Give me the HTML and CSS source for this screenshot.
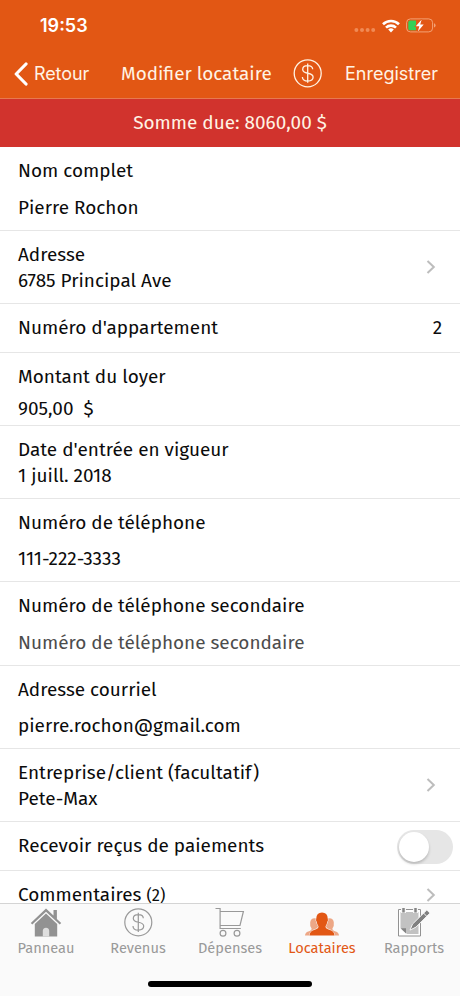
FILE: index.html
```html
<!DOCTYPE html>
<html lang="fr">
<head>
    <meta charset="UTF-8">
    <meta name="viewport" content="width=device-width, initial-scale=1.0">
    <title>Modifier locataire</title>
    <link rel="stylesheet" href="styles.css">
</head>
<body>
    <div class="screen">
        <header class="header">
            <div class="status-bar">
                <span class="time">19:53</span>
                <div class="status-icons">
                    <svg width="22" height="6" viewBox="0 0 22 6" fill="#f08a55">
                        <circle cx="2.4" cy="3" r="2"/><circle cx="8" cy="3" r="2"/><circle cx="13.6" cy="3" r="2"/><circle cx="19.2" cy="3" r="2"/>
                    </svg>
                    <svg class="wifi" width="18" height="14" viewBox="0 0 18 14" fill="none" stroke="#fff" stroke-width="2.6">
                        <path d="M1 5.3a11.4 11.4 0 0 1 16 0"/>
                        <path d="M4 8.6a7.2 7.2 0 0 1 10 0"/>
                        <path d="M6.2 10.6a4 4 0 0 1 5.6 0L9 13.6z" fill="#fff" stroke="none"/>
                    </svg>
                    <svg width="30" height="15" viewBox="0 0 30 15">
                        <rect x=".6" y=".9" width="26" height="13" rx="3.8" fill="none" stroke="#f3a276"/>
                        <path d="M28 5.2q1.6.6 1.6 2.2T28 9.6z" fill="#f3a276"/>
                        <path d="M4.2 2.5H10v9.8H4.2q-1.9 0-1.9-1.9V4.4q0-1.9 1.9-1.9z" fill="#33d057"/>
                        <path d="M15.7 1.4 9.8 8.2h3.5l-1.4 5.2 5.8-6.9h-3.5z" fill="#fff" stroke="#e25714" stroke-width="1.4" paint-order="stroke"/>
                    </svg>
                </div>
            </div>
            <nav class="nav-bar">
                <a class="back">
                    <svg width="14" height="24" viewBox="0 0 14 24" fill="none" stroke="#fff" stroke-width="3.2" stroke-linecap="round" stroke-linejoin="round">
                        <path d="M12 2 2.2 12 12 22"/>
                    </svg>
                    <span>Retour</span>
                </a>
                <h1 class="title">Modifier locataire</h1>
                <svg width="30" height="30" viewBox="0 0 30 30" fill="none" stroke="#fff3e4" stroke-width="1.3">
                    <circle cx="14.7" cy="14.3" r="13.5"/>
                    <path d="M14.7 4.6v19.2M19.7 10.3c0-2.4-2-3.7-5-3.7s-5 1.4-5 3.8c0 5.4 10.4 2.3 10.4 7.7 0 2.5-2.2 4-5.4 4s-5.3-1.5-5.3-4.2"/>
                </svg>
                <a class="save">Enregistrer</a>
            </nav>
        </header>

        <div class="amount-due"><span>Somme due: 8060,00 $</span></div>

        <main class="form">
            <div class="row row-tall">
                <div class="label">Nom complet</div>
                <div class="value">Pierre Rochon</div>
            </div>
            <div class="row row-link">
                <div>
                    <div class="label">Adresse</div>
                    <div class="value">6785 Principal Ave</div>
                </div>
                <svg class="chevron" width="10" height="16" viewBox="0 0 10 16"><path d="M1.5 2 7.8 8l-6.3 6"/></svg>
            </div>
            <div class="row row-single">
                <div class="label">Numéro d'appartement</div>
                <div class="value">2</div>
            </div>
            <div class="row row-amount">
                <div class="label">Montant du loyer</div>
                <div class="value">905,00&nbsp; $</div>
            </div>
            <div class="row row-medium">
                <div class="label">Date d'entrée en vigueur</div>
                <div class="value">1 juill. 2018</div>
            </div>
            <div class="row row-tall">
                <div class="label">Numéro de téléphone</div>
                <div class="value">111-222-3333</div>
            </div>
            <div class="row row-tall">
                <div class="label">Numéro de téléphone secondaire</div>
                <div class="value placeholder">Numéro de téléphone secondaire</div>
            </div>
            <div class="row row-tall">
                <div class="label">Adresse courriel</div>
                <div class="value">pierre.rochon@gmail.com</div>
            </div>
            <div class="row row-link">
                <div>
                    <div class="label">Entreprise/client (facultatif)</div>
                    <div class="value">Pete-Max</div>
                </div>
                <svg class="chevron" width="10" height="16" viewBox="0 0 10 16"><path d="M1.5 2 7.8 8l-6.3 6"/></svg>
            </div>
            <div class="row row-single row-switch">
                <div class="label">Recevoir reçus de paiements</div>
                <div class="switch"><div class="knob"></div></div>
            </div>
            <div class="row row-single row-last">
                <div class="label">Commentaires <span class="count">(2)</span></div>
                <svg class="chevron" width="10" height="16" viewBox="0 0 10 16"><path d="M1.5 2 7.8 8l-6.3 6"/></svg>
            </div>
        </main>

        <footer class="tab-bar">
            <div class="tabs">
                <a class="tab">
                    <svg width="32" height="32" viewBox="0 0 32 32" fill="#929292">
                        <path d="M16 1.5.8 16l1.5 1.5L16 4.8l13.7 12.7 1.5-1.5-4.3-4.1V3h-3.4v5.6z"/>
                        <path d="M16 6.5 4.8 17v12.5h22.400V17z"/>
                        <path d="M12.800 29.500v-5.700c0-4 6.400-4 6.400 0v5.700z" fill="#dedede"/>
                    </svg>
                    <span>Panneau</span>
                </a>
                <a class="tab">
                    <svg width="32" height="32" viewBox="0 0 32 32" fill="none" stroke="#999" stroke-width="1.2">
                        <circle cx="16.300" cy="15.300" r="13.5"/>
                        <path d="M16.300 5.700v19.200M21.300 11.300c0-2.400-2-3.700-5-3.700s-5 1.400-5 3.800c0 5.400 10.400 2.300 10.400 7.700 0 2.500-2.200 4-5.400 4s-5.300-1.500-5.300-4.200"/>
                    </svg>
                    <span>Revenus</span>
                </a>
                <a class="tab">
                    <svg width="32" height="32" viewBox="0 0 32 32" fill="none" stroke="#999" stroke-width="1.2">
                        <path d="M1.500 1.500h4.600v20h20.700M6.100 4.500h23.300L26 18.500H6.100"/>
                        <circle cx="9" cy="26.300" r="2.900"/><circle cx="23" cy="26.300" r="2.900"/>
                    </svg>
                    <span>Dépenses</span>
                </a>
                <a class="tab active">
                    <svg width="34" height="32" viewBox="0 0 34 32" fill="#e25714">
                        <g opacity=".5">
                            <path d="M0 28.500q.3-3.400 3.300-4.100 3.400-.8 3.300-3-2-2.600-1.400-6.100.6-4.100 4.300-4.100t4.400 4.100q.5 3.500-1.500 6.100v7.100z"/>
                            <path d="M34 28.500q-.3-3.400-3.300-4.100-3.400-.8-3.300-3 2-2.600 1.400-6.100-.6-4.100-4.300-4.100t-4.400 4.100q-.5 3.500 1.500 6.100v7.100z"/>
                        </g>
                        <path d="M4.500 28.500q.2-4.400 4.700-5.600 4.500-1 4.300-3.700-1.500-1.800-1.800-4.700-1-.9-.5-2.600Q11.500 5.500 17 5.500t5.800 6.400q.5 1.700-.5 2.600-.3 2.900-1.800 4.700-.2 2.700 4.300 3.700 4.500 1.200 4.700 5.600z" stroke="#fafafa" paint-order="stroke"/>
                    </svg>
                    <span>Locataires</span>
                </a>
                <a class="tab">
                    <svg width="34" height="32" viewBox="0 0 34 32">
                        <path d="M1.500 2.500h22V29h-22z" fill="#fff" stroke="#929292"/>
                        <path d="M3.500 5h18v22H10l-6.500-6.500z" fill="#c2c2c2"/>
                        <path d="M3.500 21.300 9 26.500v-5.200z" fill="#858585"/>
                        <path d="M6.500 1v5M18.500 1v5" stroke="#f7f7f7" stroke-width="5"/>
                        <path d="M6.500 1v4.500M18.500 1v4.500" stroke="#858585" stroke-width="2.500"/>
                        <path d="M29.800 3 33 6.100 19 20.100l-6 3 2.500-6z" fill="#808080" stroke="#f4f4f4"/>
                        <path d="m26.500 6 3.400 3.500" stroke="#f4f4f4"/>
                    </svg>
                    <span>Rapports</span>
                </a>
            </div>
            <div class="home-indicator"></div>
        </footer>
    </div>
</body>
</html>
```
FILE: styles.css
```css
* {
    margin: 0;
    padding: 0;
    box-sizing: border-box;
}

body {
    font-family: 'Fira Sans', 'Noto Sans', sans-serif;
    background: #fff;
    color: #0b0b0b;
}

.screen {
    width: 460px;
    height: 996px;
    display: flex;
    flex-direction: column;
    overflow: hidden;
}

.header {
    height: 99px;
    flex-shrink: 0;
    background: #e25714;
    border-bottom: 1px solid #e77950;
    color: #fff3e4;
}

.status-bar {
    display: flex;
    justify-content: space-between;
    height: 49px;
    padding: 14px 24px 0 40px;
}

.time {
    font-family: Inter, sans-serif;
    font-size: 18px;
    font-weight: 600;
    line-height: 24px;
    color: #fff;
}

.status-icons {
    display: flex;
    align-items: center;
    height: 23px;
}

.status-icons svg:first-child {
    margin-top: 9px;
}

.wifi {
    margin: 0 6px;
}

.nav-bar {
    display: flex;
    align-items: center;
    height: 49px;
    padding: 0 22px 0 14px;
    white-space: nowrap;
}

.back {
    display: flex;
    align-items: center;
    gap: 6px;
    width: 107px;
    font-family: Inter, sans-serif;
    font-size: 18px;
    letter-spacing: -0.1px;
}

.title {
    width: 172px;
    font-size: 18.9px;
    font-weight: 400;
}

.save {
    margin-left: auto;
    font-family: Inter, sans-serif;
    font-size: 18px;
}

.amount-due {
    display: flex;
    justify-content: center;
    height: 48px;
    padding-top: 11px;
    flex-shrink: 0;
    background: #d1332d;
    color: #fff3e4;
    font-size: 18.95px;
    line-height: 25px;
}

.form {
    height: 756px;
    flex-shrink: 0;
    font-size: 18.95px;
    line-height: 26px;
    white-space: nowrap;
}

.row {
    padding: 11px 18px 0;
    border-bottom: 1px solid #e6e6e6;
}

.row-tall {
    height: 83.5px;
}

.row-tall .value {
    margin-top: 10.5px;
}

.row-medium,
.row-amount,
.row-link {
    height: 73px;
}

.row-amount .value {
    margin-top: 6px;
}

.row-link,
.row-single {
    display: flex;
    justify-content: space-between;
}

.row-single {
    height: 49px;
}

.row-link,
.row-last {
    padding-right: 24px;
}

.row-link .chevron {
    margin-top: 17px;
}

.row-last .chevron {
    margin-top: 5px;
}

.chevron {
    fill: none;
    stroke: #bdbdbd;
    stroke-width: 2;
}

.placeholder {
    color: #4c4c4c;
}

.count {
    font-size: 16.5px;
}

.row-switch {
    padding-right: 7px;
}

.switch {
    width: 56px;
    height: 34px;
    margin-top: -3px;
    padding: 2px;
    border-radius: 17px;
    background: #e6e6e6;
}

.knob {
    width: 30px;
    height: 30px;
    border-radius: 50%;
    background: #fff;
    box-shadow: 0 2px 3px rgba(0, 0, 0, 0.2);
}

.tab-bar {
    flex: 1;
    display: flex;
    flex-direction: column;
    align-items: center;
    border-top: 1px solid #d4d4d4;
    background: #fafafa;
}

.tabs {
    display: grid;
    grid-template-columns: repeat(5, 1fr);
    width: 460px;
    height: 80px;
    padding-top: 3px;
}

.tab {
    display: flex;
    flex-direction: column;
    align-items: center;
    color: #999;
    font-size: 14.6px;
    line-height: 19px;
}

.tab.active {
    color: #e25714;
}

.home-indicator {
    width: 164px;
    height: 6px;
    margin-top: -3px;
    border-radius: 3px;
    background: #000;
}
```
